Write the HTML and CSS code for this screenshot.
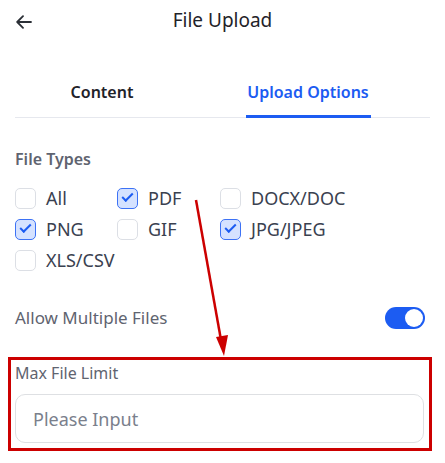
FILE: index.html
```html
<!DOCTYPE html>
<html lang="en">
<head>
    <meta charset="UTF-8">
    <meta name="viewport" content="width=device-width, initial-scale=1.0">
    <title>File Upload</title>
    <link rel="stylesheet" href="styles.css">
</head>
<body>
    <div class="page">
        <div class="header">
            <button class="back" aria-label="Back">
                <svg width="16" height="14" viewBox="0 0 16 14" fill="none" stroke="#2b2f36" stroke-width="1.8" stroke-linecap="round" stroke-linejoin="round">
                    <path d="M15 7H1.5M7 1.2L1.2 7L7 12.8"/>
                </svg>
            </button>
            <h1>File Upload</h1>
        </div>

        <div class="tabs">
            <div class="tab">Content</div>
            <div class="tab active">Upload Options</div>
        </div>

        <div class="section">
            <div class="section-title">File Types</div>
            <div class="types">
                <label class="check"><span class="box"></span>All</label>
                <label class="check"><span class="box on"></span>PDF</label>
                <label class="check"><span class="box"></span>DOCX/DOC</label>
                <label class="check"><span class="box on"></span>PNG</label>
                <label class="check"><span class="box"></span>GIF</label>
                <label class="check"><span class="box on"></span>JPG/JPEG</label>
                <label class="check"><span class="box"></span>XLS/CSV</label>
            </div>
        </div>

        <div class="row-switch">
            <span>Allow Multiple Files</span>
            <span class="switch"><span class="knob"></span></span>
        </div>

        <div class="field highlight">
            <div class="field-label">Max File Limit</div>
            <div class="input">Please Input</div>
        </div>

        <!-- pointer from the file types down to the limit field -->
        <svg class="pointer" width="445" height="463" viewBox="0 0 445 463">
            <line x1="196" y1="200" x2="221" y2="340" stroke="#cc0000" stroke-width="2.5"/>
            <polygon points="216,337 228,335 224,356" fill="#cc0000"/>
        </svg>
    </div>
</body>
</html>
```

FILE: styles.css
```css
body {
    margin: 0;
    background: #fff;
    font-family: "Noto Sans", "Open Sans", sans-serif;
    color: #1f2329;
}
.page {
    position: relative;
    width: 445px;
    height: 463px;
    overflow: hidden;
}
.header {
    height: 40px;
    display: flex;
    align-items: center;
    justify-content: center;
    position: relative;
}
.back {
    position: absolute;
    left: 12px;
    top: 12px;
    width: 24px;
    height: 20px;
    padding: 0;
    border: none;
    background: none;
    display: flex;
    align-items: center;
    justify-content: center;
}
h1 {
    margin: 0;
    font-size: 19px;
    font-weight: 400;
    color: #1f2329;
}
.tabs {
    margin: 26px 15px 0;
    display: grid;
    grid-template-columns: 174px 238px;
    border-bottom: 1px solid #e6e8ee;
    height: 51px;
}
.tab {
    display: flex;
    justify-content: center;
    align-items: center;
    font-size: 16px;
    font-weight: 600;
    color: #1f2329;
    position: relative;
}
.tab.active {
    color: #1c5cf2;
}
.tab.active::after {
    content: "";
    position: absolute;
    bottom: -1px;
    left: 50%;
    width: 125px;
    margin-left: -62px;
    height: 3px;
    background: #1c5cf2;
}
.section {
    padding: 30px 15px 0;
}
.section-title {
    font-size: 16px;
    font-weight: 600;
    color: #5f6470;
    line-height: 22px;
}
.types {
    margin-top: 18px;
    display: grid;
    grid-template-columns: 102px 103px auto;
    row-gap: 10px;
}
.check {
    display: flex;
    align-items: center;
    gap: 10px;
    font-size: 18px;
    color: #3a4150;
    line-height: 21px;
}
.box {
    width: 19px;
    height: 19px;
    border: 1px solid #dcdfe5;
    border-radius: 5px;
    background: #fff;
    position: relative;
}
.box.on {
    background: #d5e2ff;
    border-color: #3d72f5;
}
.box.on::after {
    content: "";
    position: absolute;
    left: 4px;
    top: 4px;
    width: 9px;
    height: 4px;
    border-left: 2px solid #1c5cf2;
    border-bottom: 2px solid #1c5cf2;
    transform: rotate(-45deg);
}
.row-switch {
    margin: 35px 20px 0 15px;
    display: flex;
    justify-content: space-between;
    align-items: center;
    font-size: 17px;
    color: #5f6470;
}
.switch {
    width: 40px;
    height: 22px;
    border-radius: 11px;
    background: #1c5cf2;
    display: flex;
    align-items: center;
    justify-content: flex-end;
    padding: 0 2px;
    box-sizing: border-box;
}
.knob {
    width: 18px;
    height: 18px;
    border-radius: 50%;
    background: #fff;
}
.highlight {
    margin: 28px 13px 0 8px;
    border: 3px solid #cc0000;
    padding: 1px 5px 5px 4px;
}
.field-label {
    font-size: 16px;
    color: #5f6470;
    line-height: 24px;
}
.input {
    margin-top: 9px;
    height: 47px;
    border: 1px solid #dee0e3;
    border-radius: 10px;
    padding: 0 17px;
    display: flex;
    align-items: center;
    font-size: 18px;
    color: #7a808c;
}
.pointer {
    position: absolute;
    left: 0;
    top: 0;
    pointer-events: none;
}
```
